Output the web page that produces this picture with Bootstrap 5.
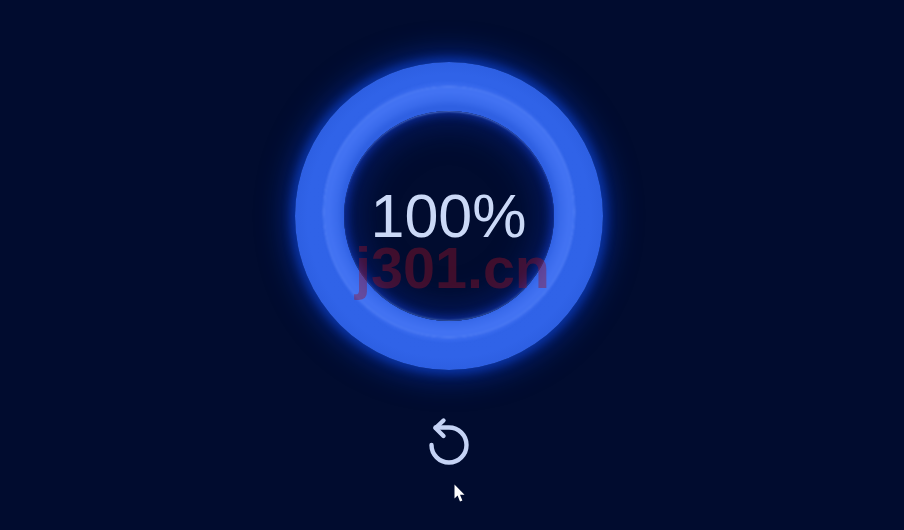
<!DOCTYPE html>
<html lang="en"><head><meta charset="utf-8"><title>Progress</title>
<link rel="stylesheet" href="https://cdn.jsdelivr.net/npm/bootstrap@5.3.0/dist/css/bootstrap.min.css">
<style>
html,body{height:100%;margin:0}
body{background:#010c2f;overflow:hidden;font-family:"Liberation Sans",Arial,sans-serif}
.stage{height:530px;padding-top:62px;position:relative}
.ring{width:308px;height:308px;margin-left:-7px;
 background:radial-gradient(circle closest-side,#2f62e6 0,#3063e8 92%,#2d5fe2 100%);
 box-shadow:0 0 10px 4px #0a34a6,0 0 26px 12px rgba(6,42,150,.6);position:relative}
.sheen{position:absolute;border-radius:50%;left:28px;right:28px;top:20px;bottom:28px;
 background:radial-gradient(circle closest-side at 50% 50%,#2f60e2 0,#2f60e2 84%,#3a6bec 89%,#4272f2 95%,#4273f2 99%,#6088f6 99.6%,#3668ec 100%);
 filter:blur(.9px)}
.hole{width:210px;height:210px;background:#010c2f;position:relative;
 box-shadow:inset 0 2px 2px -1px #4a6cc6,inset 0 -2px 2px -1px #37589f,inset 0 0 10px 3px #0d2d9c,inset 0 0 32px 14px rgba(6,32,120,.6)}
.pct{font-size:61px;line-height:1;color:#cbd9f7}
.mark-wm{position:absolute;left:355px;top:235px;font-size:57.5px;font-weight:700;line-height:1.15;color:rgba(150,18,40,.42);white-space:nowrap}
.undo{margin-top:46px;margin-left:-5px;width:44px;height:50px;display:block}
.ptr{position:absolute;left:454px;top:484px}
</style></head>
<body>
<div class="stage d-flex flex-column align-items-center">
  <div class="ring rounded-circle d-flex align-items-center justify-content-center flex-shrink-0">
    <div class="sheen"></div>
    <div class="hole rounded-circle d-flex align-items-center justify-content-center"><span class="pct">100%</span></div>
  </div>
  <svg class="undo" viewBox="0 0 44 50" fill="none" stroke="#c5d3f5" stroke-width="4.4" stroke-linecap="round" stroke-linejoin="round">
    <path d="M3.5 29A17.5 17.5 0 1 0 21 11.5H7.5"/><path d="M15.5 4.5L7.5 12L15.5 20"/>
  </svg>
  <div class="mark-wm">j301.cn</div>
  <svg class="ptr" width="13" height="19" viewBox="0 0 13 19"><path d="M0.5 0.5V14.5L3.6 11.6L6 17.5L8.4 16.4L6 10.8H10.5Z" fill="#fff"/></svg>
</div>
</body></html>
